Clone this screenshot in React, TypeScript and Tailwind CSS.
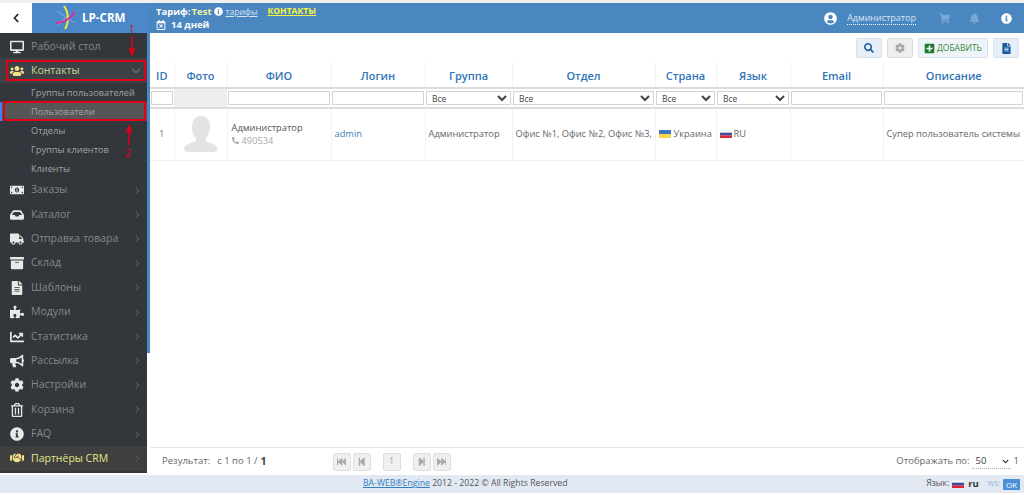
import React from "react";
import {
  FaChevronLeft, FaChevronRight, FaChevronDown, FaDesktop, FaUsers, FaMoneyBillAlt, FaInbox, FaTruck, FaArchive, FaFileAlt,
  FaPuzzlePiece, FaChartLine, FaBullhorn, FaCog, FaRegTrashAlt, FaInfoCircle, FaHandshake, FaSearch, FaPlusSquare, FaUserCircle,
  FaShoppingCart, FaBell, FaPhoneAlt, FaRegCalendarTimes, FaFastBackward, FaStepBackward, FaStepForward, FaFastForward,
} from "react-icons/fa";

const font = { fontFamily: '"Open Sans", "Noto Sans", sans-serif' };

function MenuRow({ icon, label }: { icon: React.ReactNode; label: string }) {
  return (
    <div className="flex h-[24.4px] items-center pl-[9px] pr-[6px] text-[10.5px] text-[#85888c]">
      <span className="flex w-[16px] justify-center text-[14px] text-[#e8e8e8]">{icon}</span>
      <span className="ml-[6px] flex-1 whitespace-nowrap">{label}</span>
      <FaChevronRight className="text-[7px] text-[#55585c]" />
    </div>
  );
}

function SubRow({ label, active }: { label: string; active?: boolean }) {
  return (
    <div className={`flex h-[19px] items-center whitespace-nowrap text-[9.2px] text-[#a2a4a7] ${active ? "border-l-[2px] border-[#3b82f6] bg-[#565656] pl-[29px]" : "pl-[31px]"}`}>{label}</div>
  );
}

function Flag({ top, mid, bottom }: { top: string; mid?: string; bottom: string }) {
  return (
    <svg width="12" height="8" viewBox="0 0 12 8" className="inline-block shrink-0">
      {mid ? (
        <>
          <rect width="12" height="2.7" fill={top} />
          <rect y="2.7" width="12" height="2.6" fill={mid} />
          <rect y="5.3" width="12" height="2.7" fill={bottom} />
        </>
      ) : (
        <>
          <rect width="12" height="4" fill={top} />
          <rect y="4" width="12" height="4" fill={bottom} />
        </>
      )}
    </svg>
  );
}

function Logo() {
  return (
    <svg width="24" height="26" viewBox="0 0 24 26" className="shrink-0">
      <path d="M2 6 L20 18" stroke="#76a0d2" strokeWidth="1.500" fill="none" />
      <path d="M3 20 L13 11" stroke="#76a0d2" strokeWidth="1.500" fill="none" />
      <path d="M9 1 C14 8 14 18 10 24" stroke="#f2ea30" strokeWidth="2" fill="none" />
      <path d="M1 18 C8 18 15 14 20 7" stroke="#e2259b" strokeWidth="2" fill="none" />
    </svg>
  );
}

const th = "h-[25px] border-r border-[#f2f2f2] pt-[3px] text-center text-[11px] font-semibold text-[#2f74b5] last:border-r-0";
const filterTd = "px-[1px] align-middle";
const td = "border-r border-[#f2f2f2] align-middle text-[9.3px] last:border-r-0";

function FilterInput() {
  return <input className="block h-[14px] w-full border border-[#d4d4d4] bg-white" />;
}
function FilterSelect() {
  return (
    <select className="block h-[14px] w-full border border-[#d4d4d4] bg-white pl-[1px] text-[8.5px] text-[#444]" style={font}>
      <option>Все</option>
    </select>
  );
}

function PageBtn({ children, className = "" }: { children: React.ReactNode; className?: string }) {
  return (
    <span className={`flex h-[18px] w-[18px] items-center justify-center rounded-[2px] border border-[#dedede] bg-[#f0f0f0] text-[9.5px] text-[#aaa] ${className}`}>
      {children}
    </span>
  );
}

export default function App() {
  return (
    <div className="relative flex h-[495px] w-[1024px] flex-col overflow-hidden bg-white" style={font}>
      <div className="h-[3px] shrink-0 bg-[#f1f1f1]" />
      {/* Header */}
      <header className="flex h-[30px] shrink-0 items-center bg-[#4a86c0] text-white">
        <div className="flex h-full w-[32px] items-center justify-center bg-white">
          <FaChevronLeft className="text-[10px] text-[#222]" />
        </div>
        <div className="flex h-full w-[117px] items-center bg-[#4a88c9] pl-[23px]">
          <Logo />
          <span className="ml-[3px] text-[11.6px] font-bold">LP-CRM</span>
        </div>
        <div className="ml-[7px] flex flex-col text-[9.5px] font-bold leading-[13px]">
          <div className="flex items-center">
            <span>Тариф:</span>
            <span className="ml-[1px] text-[#f0f0a0]">Test</span>
            <FaInfoCircle className="ml-[2px] text-[9px]" />
            <span className="ml-[3px] text-[8.5px] font-normal text-[#d5e3f2] underline">тарифы</span>
            <span className="ml-[10px] text-[8.6px] text-[#f7f63c] underline">КОНТАКТЫ</span>
          </div>
          <div className="flex items-center">
            <FaRegCalendarTimes className="text-[10px]" />
            <span className="ml-[5px]">14 дней</span>
          </div>
        </div>
        <div className="ml-auto flex items-center pr-[12px]">
          <FaUserCircle className="text-[13px]" />
          <span className="ml-[10px] border-b border-dotted border-white text-[9px] leading-[12px] text-[#dbe7f4]">Администратор</span>
          <FaShoppingCart className="ml-[23px] text-[11px] text-[#79a6d3]" />
          <FaBell className="ml-[19px] text-[11px] text-[#79a6d3]" />
          <FaInfoCircle className="ml-[21px] text-[11px]" />
        </div>
      </header>

      <div className="flex min-h-0 flex-1">
        {/* Sidebar */}
        <div className="flex h-[440px] w-[147px] shrink-0 flex-col bg-[#33363b]">
          <div className="h-[2px]" />
          <div className="flex h-[23.4px] items-center pl-[9px] pr-[6px] text-[10.5px] text-[#85888c]">
            <span className="flex w-[16px] justify-center text-[14px] text-[#e8e8e8]"><FaDesktop /></span>
            <span className="ml-[6px] flex-1 whitespace-nowrap">Рабочий стол</span>
          </div>
          <div className="flex h-[24.6px] items-center bg-[#3d4145] pl-[9px] pr-[6px] pt-[1px] text-[10.5px] text-[#c6d898]">
            <span className="flex w-[16px] justify-center text-[14px] text-[#f5e08a]"><FaUsers /></span>
            <span className="ml-[6px] flex-1">Контакты</span>
            <FaChevronDown className="text-[10px] text-[#65686c]" />
          </div>
          <SubRow label="Группы пользователей" />
          <SubRow label="Пользователи" active />
          <SubRow label="Отделы" />
          <SubRow label="Группы клиентов" />
          <SubRow label="Клиенты" />
          <MenuRow icon={<FaMoneyBillAlt />} label="Заказы" />
          <MenuRow icon={<FaInbox />} label="Каталог" />
          <MenuRow icon={<FaTruck />} label="Отправка товара" />
          <MenuRow icon={<FaArchive />} label="Склад" />
          <MenuRow icon={<FaFileAlt />} label="Шаблоны" />
          <MenuRow icon={<FaPuzzlePiece />} label="Модули" />
          <MenuRow icon={<FaChartLine />} label="Статистика" />
          <MenuRow icon={<FaBullhorn />} label="Рассылка" />
          <MenuRow icon={<FaCog />} label="Настройки" />
          <MenuRow icon={<FaRegTrashAlt />} label="Корзина" />
          <MenuRow icon={<FaInfoCircle />} label="FAQ" />
          <div className="flex h-[24.4px] items-center bg-[#3f3f3f] pl-[9px] pr-[6px] text-[10.5px] text-[#e3e88a]">
            <span className="flex w-[16px] justify-center text-[14px] text-[#f5e08a]"><FaHandshake /></span>
            <span className="ml-[6px] flex-1">Партнёры CRM</span>
            <FaChevronRight className="text-[7px] text-[#55585c]" />
          </div>
        </div>
        <div className="h-[320px] w-[3px] shrink-0 bg-[#4a86c0]" />

        {/* Main */}
        <main className="flex min-w-0 flex-1 flex-col">
          <div className="flex h-[30px] shrink-0 items-center justify-end gap-[5px] pr-[5px]">
            <span className="flex h-[20px] w-[26px] items-center justify-center rounded-[2px] border border-[#d6e3ef] bg-[#e6eff8] text-[10px] text-[#1f5b9c]"><FaSearch /></span>
            <span className="flex h-[20px] w-[26px] items-center justify-center rounded-[2px] border border-[#dcdcdc] bg-[#eee] text-[10px] text-[#a5a5a5]"><FaCog /></span>
            <span className="flex h-[20px] w-[70px] items-center justify-center rounded-[2px] border border-[#d6e3ef] bg-[#eef4fa] text-[8.5px] text-[#3c8a3c]">
              <FaPlusSquare className="mr-[2px] text-[11px] text-[#1e7a2e]" />ДОБАВИТЬ
            </span>
            <span className="flex h-[20px] w-[26px] items-center justify-center rounded-[2px] border border-[#d6e3ef] bg-[#e6eff8] text-[11px] text-[#1f5b9c]"><FaFileAlt /></span>
          </div>
          <table className="w-full shrink-0 table-fixed border-collapse">
            <colgroup>
              <col className="w-[24px]" />
              <col className="w-[53px]" />
              <col className="w-[104px]" />
              <col className="w-[94px]" />
              <col className="w-[87px]" />
              <col className="w-[143px]" />
              <col className="w-[61px]" />
              <col className="w-[74px]" />
              <col className="w-[93px]" />
              <col className="w-[141px]" />
            </colgroup>
            <thead>
              <tr>
                {["ID", "Фото", "ФИО", "Логин", "Группа", "Отдел", "Страна", "Язык", "Email", "Описание"].map((h) => (
                  <th key={h} className={th}>{h}</th>
                ))}
              </tr>
              <tr className="h-[20px] border-y-2 border-[#dcdcdc]">
                <td className={filterTd}><FilterInput /></td>
                <td className="bg-[#eeeeee]" />
                <td className={filterTd}><FilterInput /></td>
                <td className={filterTd}><FilterInput /></td>
                <td className={filterTd}><FilterSelect /></td>
                <td className={filterTd}><FilterSelect /></td>
                <td className={filterTd}><FilterSelect /></td>
                <td className={filterTd}><FilterSelect /></td>
                <td className={filterTd}><FilterInput /></td>
                <td className={filterTd}><FilterInput /></td>
              </tr>
            </thead>
            <tbody>
              <tr className="h-[52px] border-b border-[#eeeeee]">
                <td className={`${td} text-center text-[#777]`}>1</td>
                <td className={td}>
                  <svg width="34" height="36" viewBox="0 0 34 36" className="mx-auto">
                    <path d="M17 0c6 0 9 5 9 11 0 5-2 9-4.500 11v3c3 2 12 3 12 8 0 2-2 3-4 3H4c-2 0-4-1-4-3 0-5 9-6 12-8v-3C9.500 20 8 16 8 11 8 5 11 0 17 0z" fill="#e3e3e3" />
                  </svg>
                </td>
                <td className={`${td} pl-[4px]`}>
                  <div className="leading-[13px] text-[#555]">Администратор</div>
                  <div className="flex items-center leading-[14px] text-[#aaa]"><FaPhoneAlt className="mr-[3px] text-[7px]" />490534</div>
                </td>
                <td className={`${td} pl-[3px] text-[#3a7fc0]`}>admin</td>
                <td className={`${td} pl-[3px] text-[#666]`}>Администратор</td>
                <td className={`${td} whitespace-nowrap pl-[3px] text-[#666]`}>Офис №1, Офис №2, Офис №3,</td>
                <td className={`${td} pl-[3px] text-[#666]`}>
                  <span className="flex items-center gap-[3px]"><Flag top="#3f73c4" bottom="#f6d84a" />Украина</span>
                </td>
                <td className={`${td} pl-[3px] text-[#666]`}>
                  <span className="flex items-center gap-[2px]"><Flag top="#f4f4f4" mid="#3c4f9f" bottom="#d8283a" />RU</span>
                </td>
                <td className={td} />
                <td className={`${td} whitespace-nowrap pl-[3px] text-[#666]`}>Супер пользователь системы</td>
              </tr>
            </tbody>
          </table>
          <div className="flex-1" />
          <div className="relative mb-[20px] flex h-[28px] shrink-0 items-center border-t border-[#dfe6ee] pl-[12px] pr-[5px] text-[9.5px] text-[#666]">
            <span>Результат:</span>
            <span className="ml-[7px]">с 1 по 1 /</span>
            <b className="ml-[3px] text-[10.5px] text-[#444]">1</b>
            <div className="ml-[66px] flex items-center gap-[2px]">
              <PageBtn><FaFastBackward /></PageBtn>
              <PageBtn><FaStepBackward /></PageBtn>
              <PageBtn className="ml-[10px]">1</PageBtn>
              <PageBtn className="ml-[10px]"><FaStepForward /></PageBtn>
              <PageBtn><FaFastForward /></PageBtn>
            </div>
            <div className="ml-auto flex items-center">
              <span>Отображать по:</span>
              <span className="ml-[2px] flex w-[39px] items-center justify-between border-b border-dotted border-[#aaa] pr-[2px] text-[#444]">
                <span className="pl-[4px]">50</span><FaChevronDown className="text-[7px] text-[#222]" />
              </span>
              <span className="ml-[3px]">1</span>
            </div>
          </div>
        </main>
      </div>

      {/* Footer */}
      <footer className="absolute bottom-[2px] left-0 flex h-[18px] w-[1024px] items-center bg-[#e2e9f3] text-[8.7px] text-[#555]">
        <span className="ml-[363px]"><span className="text-[#2f7fc0] underline">BA-WEB®Engine</span> 2012 - 2022 © All Rights Reserved</span>
        <span className="ml-auto">Язык:</span>
        <span className="ml-[3px] flex"><Flag top="#f4f4f4" mid="#3c4f9f" bottom="#d8283a" /></span>
        <b className="ml-[4px] text-[9.5px] text-[#333]">ru</b>
        <span className="ml-[9px] text-[7px] text-[#8eb0dc]">WS:</span>
        <span className="ml-[3px] mr-[4px] w-[17px] rounded-[1px] bg-[#4a90d9] text-center text-[8px] leading-[11px] text-white">OK</span>
      </footer>

      {/* Annotations */}
      <div className="absolute left-[6px] top-[60px] h-[21px] w-[140px] border-2 border-[#e0001a]" />
      <div className="absolute left-[3px] top-[101px] h-[20px] w-[143px] border-2 border-[#e0001a]" />
      <span className="absolute left-[129px] top-[23px] text-[10px] leading-[12px] text-[#e0001a]">1</span>
      <svg className="absolute left-[128px] top-[36px]" width="8" height="21" viewBox="0 0 8 21">
        <path d="M4 0V14" stroke="#e0001a" strokeWidth="1.500" />
        <path d="M0.500 12.500H7.500L4 21z" fill="#e0001a" />
      </svg>
      <svg className="absolute left-[125px] top-[124px]" width="8" height="21" viewBox="0 0 8 21">
        <path d="M4 7V21" stroke="#e0001a" strokeWidth="1.500" />
        <path d="M0.500 8.500H7.500L4 0z" fill="#e0001a" />
      </svg>
      <span className="absolute left-[125px] top-[147px] text-[11px] leading-[12px] text-[#e0001a]">2</span>
    </div>
  );
}
